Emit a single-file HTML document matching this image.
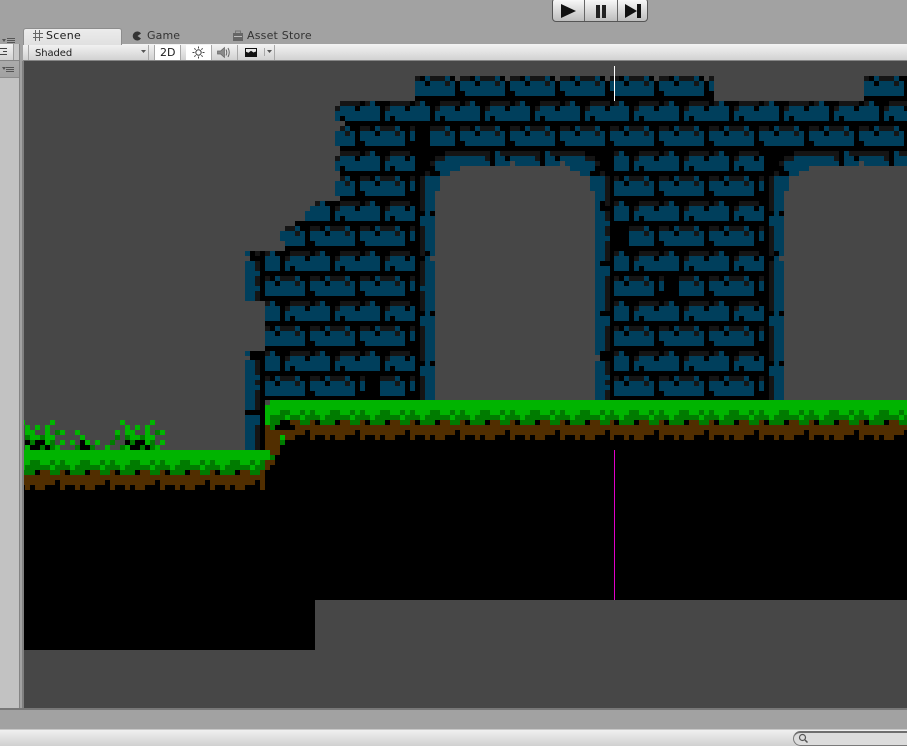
<!DOCTYPE html>
<html><head><meta charset="utf-8"><style>
html,body{margin:0;padding:0;background:#a2a2a2}
#p{position:relative;width:907px;height:746px;overflow:hidden;background:#a2a2a2;font-family:"DejaVu Sans",sans-serif;color:#1c1c1c}
#p div,#p span{position:absolute;white-space:nowrap}
svg{position:absolute;left:0;top:0}
</style></head><body><div id="p">
<div style="left:24px;top:61px;width:883px;height:648px;background:#474747"></div>
<div style="left:0;top:44px;width:907px;height:16px;background:linear-gradient(#f3f3f3,#d2d2d2);border-bottom:1px solid #858585"></div>
<div style="left:23px;top:28px;width:97px;height:16px;background:linear-gradient(#ececec,#e0e0e0);border:1px solid #8d8d8d;border-bottom:0;border-radius:3px 3px 0 0"></div>
<div style="left:0;top:61px;width:19px;height:648px;background:#c2c2c2"></div>
<div style="left:0;top:61px;width:19px;height:17px;background:linear-gradient(#ababab,#a2a2a2);border-bottom:1px solid #8d8d8d;box-sizing:border-box"></div>
<div style="left:19px;top:44px;width:4px;height:665px;background:#a2a2a2"></div>
<div style="left:19px;top:44px;width:1px;height:665px;background:#858585"></div>
<div style="left:22px;top:61px;width:2px;height:648px;background:#808080"></div>
<div style="left:13px;top:44px;width:1px;height:16px;background:#9a9a9a"></div>
<div style="left:14px;top:44px;width:5px;height:16px;background:#c8c8c8"></div>
<div style="left:155px;top:45px;width:25px;height:15px;background:#fff"></div>
<div style="left:186px;top:45px;width:25px;height:15px;background:#fff"></div>
<div style="left:0;top:708px;width:907px;height:2px;background:#787878"></div>
<div style="left:0;top:729px;width:907px;height:17px;background:linear-gradient(#f0f0f0,#d0d0d0);border-top:1px solid #c8c8c8;box-sizing:border-box"></div>
<div style="left:793px;top:731px;width:130px;height:15px;background:#dcdcdc;border:1px solid #7a7a7a;border-top:2px solid #6e6e6e;border-radius:8px 0 0 8px;box-sizing:border-box"></div>
<div style="left:552px;top:-2px;width:96px;height:24px;box-sizing:border-box;border:1px solid #555;border-radius:4px;background:linear-gradient(#fafafa,#bdbdbd)"></div>
<div style="left:584px;top:0;width:1px;height:21px;background:#666"></div>
<div style="left:617px;top:0;width:1px;height:21px;background:#666"></div>

<span style="left:46px;top:29px;font-size:11px;line-height:14px;letter-spacing:.3px">Scene</span>
<span style="left:147px;top:29px;font-size:11px;line-height:14px;color:#333;letter-spacing:.1px">Game</span>
<span style="left:247px;top:29px;font-size:11px;line-height:14px;color:#333;letter-spacing:.2px">Asset Store</span>
<span style="left:35px;top:47px;font-size:10px;line-height:13px;letter-spacing:-.1px">Shaded</span>
<span style="left:160px;top:46px;font-size:11px;line-height:13px">2D</span>

<svg width="907" height="746" viewBox="0 0 907 746" shape-rendering="crispEdges">
<defs>
<g id="A"><path fill="#003f5c" d="M35 0h5v5h-5zM5 5h15v5H5zM25 5h20v5H25zM0 10h45v5H0zM0 15h5v5H0zM10 15h35v5H10z"/><path fill="#151515" d="M5 0h20v5H5zM30 0h5v5h-5zM0 5h5v5H0z"/></g>
<g id="B"><path fill="#003f5c" d="M15 0h5v5h-5zM35 0h5v5h-5zM0 5h15v5H0zM20 5h15v5H20zM40 5h5v5h-5zM0 10h45v5H0zM5 15h40v5H5z"/><path fill="#151515" d="M0 0h10v5H0zM20 0h15v5H20zM35 5h5v5h-5z"/></g>
<g id="T"><use href="#A"/><use href="#B" x="25" y="25"/><use href="#B" x="-25" y="25"/></g>
<pattern id="pL" width="50" height="50" patternUnits="userSpaceOnUse" patternTransform="translate(35 1)"><use href="#T"/></pattern>
<pattern id="pR" width="50" height="50" patternUnits="userSpaceOnUse" patternTransform="translate(34 1)"><use href="#T"/></pattern>
<g id="G">
<path fill="#00b400" d="M0 0h50v20H0z"/>
<path fill="#007b00" d="M0 10h10v5H0zM20 10h5v5h-5zM30 10h5v5h-5zM0 15h20v5H0zM25 15h15v5H25zM45 15h5v5h-5zM0 20h5v5H0zM20 20h10v5H20zM40 20h10v5H40z"/>
<path fill="#000" d="M5 20h5v5H5zM35 20h5v5h-5z"/>
<path fill="#512e00" d="M10 20h10v5H10zM30 20h5v5h-5zM0 25h50v5H0zM0 30h25v5H0zM30 30h20v5H30zM5 35h10v5H5zM30 35h5v5h-5zM45 35h5v5h-5z"/>
</g>
<pattern id="gL" width="50" height="50" patternUnits="userSpaceOnUse" patternTransform="translate(30 0)"><use href="#G"/></pattern>
<pattern id="gR" width="50" height="50" patternUnits="userSpaceOnUse" patternTransform="translate(29 0)"><use href="#G"/></pattern>
<path id="sil" d="M415 76H714V101H864V76H907V400H260V450H245V351H265V301H245V251H285V241H280V231H285V226H295V221H305V211H310V206H315V201H340V196H335V181H340V171H335V156H340V146H335V131H340V126H345V121H335V106H340V101H415Z"/>
<clipPath id="cL"><rect x="0" y="0" width="614" height="746"/></clipPath>
<clipPath id="cR"><rect x="614" y="0" width="293" height="746"/></clipPath>
</defs>

<!-- wall -->
<use href="#sil" fill="#000"/>
<use href="#sil" fill="url(#pL)" clip-path="url(#cL)"/>
<use href="#sil" fill="url(#pR)" clip-path="url(#cR)"/>
<!-- erase -->
<path fill="#000" d="M245 251h20v50h-20zM245 351h20v99h-20zM415 151h10v249h-10zM415 151h199v25H415zM600 176h14v224h-14zM764 151h143v25H764zM764 176h10v224h-10zM415 126h15v20h-15zM614 226h15v20h-15zM664 276h15v20h-15zM365 376h15v20h-15z"/>
<path fill="#474747" d="M455 76h5v5h-5zM505 76h5v5h-5zM555 76h5v5h-5zM605 76h5v5h-5zM654 76h5v5h-5zM704 76h5v5h-5z"/>
<!-- arches grey -->
<path fill="#474747" d="M435 400V191H440V176H450V171H460V166H570V171H580V176H590V191H595V400Z"/>
<path fill="#474747" d="M784 400V191H789V176H799V171H809V166H907V400Z"/>
<!-- arch bands -->
<path fill="#151515" d="M445 151h45v5h-45zM500 151h40v5h-40zM550 151h35v5h-35zM435 156h10v5h-10zM485 156h5v5h-5zM535 156h5v5h-5zM585 156h10v5h-10zM430 161h5v5h-5zM595 161h5v5h-5zM425 171h5v5h-5zM600 171h5v5h-5zM794 151h45v5h-45zM849 151h40v5h-40zM899 151h8v5h-8zM784 156h10v5h-10zM834 156h5v5h-5zM884 156h5v5h-5zM779 161h5v5h-5zM774 171h5v5h-5z"/>
<path fill="#003f5c" d="M495 151h5v5h-5zM545 151h5v5h-5zM445 156h40v5h-40zM495 156h10v5h-10zM510 156h25v5h-25zM545 156h10v5h-10zM560 156h25v5h-25zM435 161h55v5h-55zM495 161h15v5h-15zM515 161h25v5h-25zM545 161h15v5h-15zM565 161h30v5h-30zM435 166h25v5h-25zM570 166h25v5h-25zM440 171h10v5h-10zM580 171h10v5h-10zM844 151h5v5h-5zM894 151h5v5h-5zM794 156h40v5h-40zM844 156h10v5h-10zM859 156h25v5h-25zM894 156h13v5h-13zM784 161h55v5h-55zM844 161h15v5h-15zM864 161h25v5h-25zM894 161h13v5h-13zM784 166h25v5h-25zM789 171h10v5h-10z"/>
<path fill="#474747" d="M510 161h5v5h-5zM560 161h5v5h-5zM859 161h5v5h-5z"/>
<!-- pillar A x425 -->
<path fill="#151515" d="M420 176h5v35h-5zM420 226h5v30h-5zM420 261h5v25h-5zM420 291h5v20h-5zM420 326h5v35h-5zM420 376h5v24h-5z"/>
<path fill="#003f5c" d="M425 176h15v15h-15zM425 191h10v20h-10zM420 216h15v10h-15zM425 226h10v25h-10zM430 251h5v5h-5zM425 261h10v50h-10zM420 286h5v5h-5zM420 316h15v10h-15zM425 326h10v35h-10zM420 366h15v10h-15zM425 376h10v24h-10z"/>
<path fill="#474747" d="M430 256h5v5h-5z"/>
<!-- pillar B x595 -->
<path fill="#151515" d="M605 176h5v30h-5zM605 211h5v10h-5zM605 226h5v10h-5zM605 241h5v20h-5zM605 276h5v35h-5zM605 326h5v25h-5zM605 361h5v14h-5zM605 380h5v5h-5zM605 390h5v10h-5z"/>
<path fill="#003f5c" d="M590 176h15v15h-15zM595 191h10v10h-10zM595 201h5v10h-5zM595 211h10v50h-10zM605 221h5v5h-5zM605 236h5v5h-5zM595 266h15v10h-15zM595 276h10v35h-10zM595 316h15v10h-15zM595 326h10v25h-10zM595 351h5v4h-5zM595 361h10v39h-10zM605 375h5v5h-5zM605 385h5v5h-5z"/>
<path fill="#474747" d="M595 355h5v6h-5z"/>
<!-- pillar C x774 -->
<path fill="#151515" d="M769 176h5v35h-5zM769 226h5v30h-5zM769 261h5v50h-5zM769 326h5v35h-5zM769 376h5v24h-5z"/>
<path fill="#003f5c" d="M774 176h15v15h-15zM774 191h10v20h-10zM769 216h15v10h-15zM774 226h10v25h-10zM779 251h5v5h-5zM774 261h10v50h-10zM769 316h15v10h-15zM774 326h10v35h-10zM769 366h15v10h-15zM774 376h10v24h-10z"/>
<path fill="#474747" d="M779 256h5v5h-5z"/>
<!-- pillar left x245 -->
<path fill="#151515" d="M255 261h5v10h-5zM255 276h5v10h-5zM255 291h5v10h-5zM255 251h5v5h-5zM255 360h5v15h-5zM255 380h5v5h-5zM255 390h5v20h-5zM255 425h5v25h-5z"/>
<path fill="#003f5c" d="M245 251h5v5h-5zM245 261h10v40h-10zM255 271h5v5h-5zM255 286h5v5h-5zM245 351h5v5h-5zM245 360h10v50h-10zM255 375h5v5h-5zM255 385h5v5h-5zM245 415h15v10h-15zM245 425h10v25h-10z"/>
<path fill="#474747" d="M245 256h5v5h-5zM245 356h5v4h-5z"/>

<!-- black ground -->
<path fill="#000" d="M24 450h291v200H24zM265 405h642v195H265z"/>
<!-- upper ground -->
<rect x="280" y="400" width="334" height="40" fill="url(#gL)"/>
<rect x="614" y="400" width="293" height="40" fill="url(#gR)"/>
<path fill="#00b400" d="M270 400h10v5h-10zM265 405h15v10h-15zM265 415h5v10h-5z"/>
<path fill="#007b00" d="M270 415h15v10h-15zM270 425h5v5h-5zM280 440h5v5h-5zM270 455h5v5h-5z"/>
<path fill="#00b400" d="M285 415h5v5h-5zM280 435h5v5h-5z"/>
<path fill="#000" d="M275 425h20v5h-20zM280 420h5v5h-5z"/>
<path fill="#512e00" d="M265 425h5v5h-5zM265 430h30v5h-30zM265 435h15v10h-15zM285 435h5v5h-5zM265 445h15v5h-15zM270 450h10v5h-10zM265 460h10v5h-10zM265 465h5v5h-5z"/>
<!-- lower ground -->
<rect x="24" y="450" width="241" height="40" fill="url(#gL)"/>
<path fill="#00b400" d="M265 450h5v10h-5z"/>
<!-- tufts -->
<path fill="#00b400" d="M24 420h1v5h-1zM50 420h5v5h-5zM120 420h5v5h-5zM150 420h5v5h-5zM25 425h5v5h-5zM35 425h5v5h-5zM45 425h5v5h-5zM125 425h5v5h-5zM135 425h5v5h-5zM145 425h5v5h-5zM25 430h10v5H25zM45 430h5v5h-5zM60 430h5v5h-5zM75 430h5v5h-5zM115 430h5v5h-5zM125 430h10v5h-10zM145 430h5v5h-5zM160 430h5v5h-5zM30 435h10v5H30zM45 435h10v5H45zM80 435h5v5h-5zM130 435h10v5h-10zM145 435h10v5h-10zM45 440h5v5h-5zM60 440h5v5h-5zM70 440h5v5h-5zM85 440h5v5h-5zM95 440h5v5h-5zM145 440h5v5h-5zM160 440h5v5h-5zM25 445h5v5h-5zM55 445h5v5h-5zM105 445h5v5h-5zM125 445h5v5h-5zM155 445h5v5h-5z"/>
<path fill="#007b00" d="M55 430h5v5h-5zM155 430h5v5h-5zM25 435h5v5h-5zM40 435h5v5h-5zM115 435h5v5h-5zM125 435h5v5h-5zM140 435h5v5h-5zM30 440h5v5h-5zM50 440h5v5h-5zM110 440h5v5h-5zM130 440h5v5h-5zM150 440h5v5h-5zM40 445h5v5h-5zM50 445h5v5h-5zM75 445h5v5h-5zM90 445h5v5h-5zM120 445h5v5h-5zM140 445h5v5h-5zM150 445h5v5h-5z"/>
<path fill="#000" d="M25 440h5v5h-5zM35 440h10v5H35zM80 440h5v5h-5zM125 440h5v5h-5zM135 440h10v5h-10zM30 445h10v5H30zM45 445h5v5h-5zM80 445h10v5H80zM130 445h10v5h-10zM145 445h5v5h-5z"/>
<!-- seam lines -->
<rect x="614" y="66" width="1" height="35" fill="#fff"/>
<rect x="614" y="450" width="1" height="150" fill="#e000c8"/>

<!-- toolbar separators -->
<path fill="#a8a8a8" d="M28 45h1v15h-1zM148 45h1v15h-1zM154 45h1v15h-1zM180 45h1v15h-1zM211 45h1v15h-1zM237 45h1v15h-1zM274 45h1v15h-1zM264 48h1v8h-1z"/>
<path fill="#555" d="M141 50h5l-2.500 3z" shape-rendering="auto"/>
<path fill="#555" d="M267 50h5l-2.500 3z" shape-rendering="auto"/>
<!-- menus -->
<g shape-rendering="auto">
<path fill="#555" d="M2 39h4l-2 3zM2 67h4l-2 3z"/>
<path stroke="#555" stroke-width="1" d="M7 38.500h8M7 40.500h8M7 42.500h8M6 67.500h8M6 69.500h8M6 71.500h8"/>
<path stroke="#444" stroke-width="1" d="M0 48.500h7M3 51.500h4M0 54.500h7" fill="none"/>
<!-- scene hash -->
<path stroke="#666" stroke-width="1" d="M35.500 30v11M39.500 30v11M33 33.500h10M33 37.500h10"/>
<!-- game icon -->
<path fill="#333" d="M141 33.500A4.500 4.500 0 1 0 141 38.500L137.500 36Z"/>
<!-- asset store -->
<path fill="#666" d="M233 33h10v8h-10z"/><path fill="none" stroke="#777" d="M235.500 33v-2h5v2"/><path stroke="#bbb" d="M234 36.500h8"/>
<!-- sun -->
<circle cx="198.500" cy="52.500" r="2.700" fill="none" stroke="#444"/>
<path stroke="#444" d="M198.500 46.500v2M198.500 56.500v2M192.500 52.500h2M202.500 52.500h2M194.300 48.300l1.400 1.400M201.300 55.300l1.400 1.400M194.300 56.700l1.400-1.400M201.300 49.700l1.400-1.400"/>
<!-- speaker -->
<path fill="#8a8a8a" stroke="#666" stroke-width=".7" d="M217.500 51h3l4-3.500v10l-4-3.500h-3z"/>
<path fill="none" stroke="#666" d="M226 49.500q1.500 3 0 6M228 48q2.500 4.500 0 9"/>
<!-- image -->
<path fill="#111" d="M245 48h12v9h-12z"/><path fill="#e8e8e8" d="M246 49h10v2.500l-2.500 1-2.500-1.800-2.500 2-2.500-1z"/>
<!-- transport -->
<path fill="#111" d="M561 4l15 7-15 7z"/>
<path fill="#222" d="M596 5h4v13h-4zM602 5h4v13h-4z"/>
<path fill="#111" d="M625 4l12 7-12 7zM637 4h4v14h-4z"/>
<!-- magnifier -->
<circle cx="802.500" cy="737.500" r="3" fill="none" stroke="#555" stroke-width="1.200"/><path stroke="#555" stroke-width="1.500" d="M805 740l2.500 2.500"/>
</g>
</svg>
</div></body></html>
